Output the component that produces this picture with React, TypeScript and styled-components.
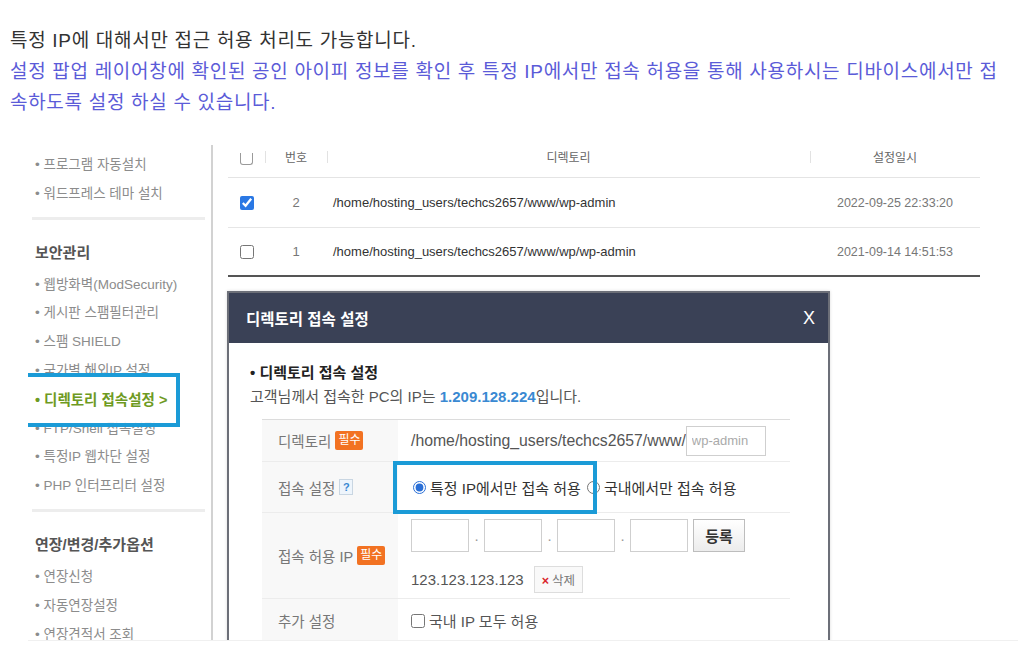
import React from "react";
import styled, { createGlobalStyle, css } from "styled-components";

const GlobalStyle = createGlobalStyle`
  html, body {
    margin: 0;
    padding: 0;
    background: #fff;
  }
  body {
    font-family: "Liberation Sans", "Noto Sans CJK KR", sans-serif;
  }
  *, *::before, *::after {
    box-sizing: border-box;
  }
`;

const Page = styled.div`
  width: 1024px;
  height: 664px;
  overflow: hidden;
  padding: 25px 0 0 10px;
`;

const Intro = styled.div`
  font-size: 19px;
  letter-spacing: 0.7px;
  line-height: 31px;
  color: #333;
  white-space: nowrap;
`;

const Accent = styled.span`
  color: #5b5bd8;
`;

const Shot = styled.div`
  display: flex;
  margin: 27px 0 0 18px;
  width: 990px;
  height: 496px;
  overflow: hidden;
  border-bottom: 1px solid #f0f0f0;
`;

/* ---------- sidebar ---------- */

const Sidebar = styled.div`
  width: 185px;
  flex-shrink: 0;
  padding: 6px 0 0 7px;
  border-right: 2px solid #d2d2d2;
`;

const SideItem = styled.div<{ $active?: boolean }>`
  position: relative;
  font-size: 13.5px;
  line-height: 28.8px;
  color: #8c8c8c;
  white-space: nowrap;
  ${(p) =>
    p.$active &&
    css`
      z-index: 1;
      color: #6e9a22;
      font-size: 14.5px;
      font-weight: bold;
      &::before {
        content: "";
        position: absolute;
        z-index: -1;
        left: -11px;
        top: -13px;
        width: 156px;
        height: 54px;
        border: 4px solid #1b9bd7;
        background: rgba(255, 255, 255, 0.9);
      }
    `}
`;

const SideSep = styled.div`
  height: 3px;
  margin: 8px 6px 0 -3px;
  background: #ededed;
`;

const SideHeading = styled.div`
  font-size: 15px;
  font-weight: bold;
  line-height: 28px;
  color: #555;
  margin: 19px 0 4px;
  white-space: nowrap;
`;

/* ---------- main table ---------- */

const Main = styled.div`
  position: relative;
  flex: 1;
  padding-left: 15px;
`;

const Grid = styled.div`
  display: grid;
  grid-template-columns: 37px 62px 483px 170px;
  width: 752px;
`;

const HeadRow = styled(Grid)`
  height: 33px;
  padding-bottom: 9px;
  border-bottom: 1px solid #e4e4e4;
  font-size: 12px;
  color: #666;
`;

const HeadCell = styled.div<{ $divider?: boolean }>`
  position: relative;
  display: flex;
  align-items: center;
  justify-content: center;
  ${(p) =>
    p.$divider &&
    css`
      &::before {
        content: "";
        position: absolute;
        left: 0;
        top: 50%;
        width: 1px;
        height: 12px;
        margin-top: -6px;
        background: #e2e2e2;
      }
    `}
`;

const CutBox = styled.span`
  width: 13px;
  height: 12px;
  margin-top: 4px;
  border: 1px solid #9a9a9a;
  border-top: none;
  border-radius: 0 0 3px 3px;
`;

const Row = styled(Grid)<{ $last?: boolean }>`
  height: ${(p) => (p.$last ? 49 : 50)}px;
  border-bottom: ${(p) => (p.$last ? "2px solid #555" : "1px solid #e6e6e6")};
  align-items: center;
`;

const Cell = styled.div<{ $align?: string; $tone?: string; $size?: number }>`
  display: flex;
  align-items: center;
  justify-content: ${(p) => p.$align || "center"};
  padding-left: ${(p) => (p.$align ? 6 : 0)}px;
  font-size: ${(p) => p.$size || 13}px;
  color: ${(p) => p.$tone || "#777"};
  white-space: nowrap;
`;

const Check = styled.input.attrs({ type: "checkbox" })`
  width: 14px;
  height: 14px;
  margin: 0;
  accent-color: #2a78e4;
`;

/* ---------- modal ---------- */

const Modal = styled.div`
  position: absolute;
  left: 14px;
  top: 146px;
  width: 603px;
  height: 380px;
  background: #fff;
  border: 2px solid #6c6f78;
  box-shadow: 0 0 3px rgba(0, 0, 0, 0.15);
`;

const ModalHead = styled.div`
  height: 50px;
  display: flex;
  align-items: center;
  justify-content: space-between;
  padding: 0 13px 0 17px;
  background: #3a4156;
  color: #fff;
  font-size: 15.5px;
  font-weight: bold;
`;

const Close = styled.span`
  font-family: "Liberation Sans", sans-serif;
  font-size: 18px;
  font-weight: normal;
`;

const ModalBody = styled.div`
  padding: 18px 0 0 21px;
`;

const BodyTitle = styled.div`
  font-size: 15px;
  font-weight: bold;
  line-height: 24px;
  color: #222;
`;

const BodyText = styled.div`
  font-size: 15px;
  line-height: 24px;
  color: #555;
`;

const MyIp = styled.b`
  color: #3a89d2;
`;

const FormTable = styled.div`
  width: 528px;
  margin: 10px 0 0 12px;
  border-top: 1px solid #dcdcdc;
`;

const FormRow = styled.div<{ $h?: number }>`
  display: grid;
  grid-template-columns: 136px 1fr;
  min-height: ${(p) => p.$h || 42}px;
  border-bottom: 1px solid #ececec;
`;

const Label = styled.div`
  display: flex;
  align-items: center;
  gap: 4px;
  padding-left: 16px;
  background: #f8f8f8;
  font-size: 14.5px;
  color: #777;
  white-space: nowrap;
`;

const Required = styled.span`
  display: inline-block;
  padding: 0 3px;
  line-height: 19px;
  font-size: 12px;
  color: #fff;
  background: #f27222;
  border-radius: 2px;
`;

const Help = styled.span`
  display: inline-flex;
  align-items: center;
  justify-content: center;
  width: 14px;
  height: 16px;
  border: 1px solid #c9d6e2;
  background: #eef5fc;
  color: #3a89d2;
  font-size: 11px;
  font-weight: bold;
`;

const Value = styled.div<{ $stack?: boolean }>`
  position: relative;
  display: flex;
  flex-direction: ${(p) => (p.$stack ? "column" : "row")};
  align-items: ${(p) => (p.$stack ? "flex-start" : "center")};
  justify-content: ${(p) => (p.$stack ? "center" : "flex-start")};
  padding: ${(p) => (p.$stack ? "6px 0 5px 13px" : "0 0 0 13px")};
  font-size: 15px;
  color: #555;
  white-space: nowrap;
`;

const Path = styled.span`
  font-size: 15.8px;
`;

const TextInput = styled.input`
  width: 80px;
  height: 30px;
  margin: 0;
  padding: 0 5px;
  border: 1px solid #cfcfcf;
  font: inherit;
  font-size: 13px;
  color: #555;
  &::placeholder {
    color: #aaa;
  }
`;

const IpInput = styled(TextInput)`
  width: 58px;
  height: 33px;
`;

const Radio = styled.input.attrs({ type: "radio", name: "mode" })`
  width: 13px;
  height: 13px;
  margin: 0 4px 0 2px;
  accent-color: #2a6fd6;
`;

const RadioText = styled.span`
  color: #333;
  margin-right: 4px;
`;

const Highlight = styled.div`
  position: absolute;
  left: -5px;
  top: -1px;
  width: 204px;
  height: 53px;
  border: 4px solid #1b9bd7;
  pointer-events: none;
`;

const Line = styled.div<{ $gap?: number }>`
  display: flex;
  align-items: center;
  margin-top: ${(p) => p.$gap || 0}px;
`;

const Dot = styled.span`
  width: 15px;
  text-align: center;
  color: #999;
`;

const RegisterButton = styled.button`
  width: 52px;
  height: 33px;
  margin-left: 5px;
  border: 1px solid #bdbdbd;
  background: linear-gradient(#ffffff, #ececec);
  font: inherit;
  font-size: 15px;
  font-weight: bold;
  color: #333;
`;

const DeleteButton = styled.button`
  height: 27px;
  margin-left: 10px;
  padding: 0 7px;
  border: 1px solid #dddddd;
  background: #f9f9f9;
  font: inherit;
  font-size: 12.5px;
  color: #777;
  b {
    color: #d9252a;
    margin-right: 3px;
  }
`;

const Box = styled.input.attrs({ type: "checkbox" })`
  width: 14px;
  height: 14px;
  margin: 0 4px 0 0;
`;

const records = [
  { id: 2, path: "/home/hosting_users/techcs2657/www/wp-admin", date: "2022-09-25 22:33:20", checked: true },
  { id: 1, path: "/home/hosting_users/techcs2657/www/wp/wp-admin", date: "2021-09-14 14:51:53", checked: false },
];

export default function App() {
  return (
    <Page>
      <GlobalStyle />
      <Intro>
        특정 IP에 대해서만 접근 허용 처리도 가능합니다.
        <br />
        <Accent>
          설정 팝업 레이어창에 확인된 공인 아이피 정보를 확인 후 특정 IP에서만 접속 허용을 통해 사용하시는 디바이스에서만 접
          <br />
          속하도록 설정 하실 수 있습니다.
        </Accent>
      </Intro>

      <Shot>
        <Sidebar>
          <SideItem>• 프로그램 자동설치</SideItem>
          <SideItem>• 워드프레스 테마 설치</SideItem>
          <SideSep />
          <SideHeading>보안관리</SideHeading>
          <SideItem>• 웹방화벽(ModSecurity)</SideItem>
          <SideItem>• 게시판 스팸필터관리</SideItem>
          <SideItem>• 스팸 SHIELD</SideItem>
          <SideItem>• 국가별 해외IP 설정</SideItem>
          <SideItem $active>• 디렉토리 접속설정 &gt;</SideItem>
          <SideItem>• FTP/Shell 접속설정</SideItem>
          <SideItem>• 특정IP 웹차단 설정</SideItem>
          <SideItem>• PHP 인터프리터 설정</SideItem>
          <SideSep />
          <SideHeading>연장/변경/추가옵션</SideHeading>
          <SideItem>• 연장신청</SideItem>
          <SideItem>• 자동연장설정</SideItem>
          <SideItem>• 연장견적서 조회</SideItem>
        </Sidebar>

        <Main>
          <HeadRow>
            <HeadCell>
              <CutBox />
            </HeadCell>
            <HeadCell $divider>번호</HeadCell>
            <HeadCell $divider>디렉토리</HeadCell>
            <HeadCell $divider>설정일시</HeadCell>
          </HeadRow>
          {records.map((r, i) => (
            <Row key={r.id} $last={i === records.length - 1}>
              <Cell>
                <Check defaultChecked={r.checked} />
              </Cell>
              <Cell>{r.id}</Cell>
              <Cell $align="flex-start" $tone="#333" $size={13}>
                {r.path}
              </Cell>
              <Cell $size={12.5}>{r.date}</Cell>
            </Row>
          ))}

          <Modal>
            <ModalHead>
              <span>디렉토리 접속 설정</span>
              <Close>X</Close>
            </ModalHead>
            <ModalBody>
              <BodyTitle>• 디렉토리 접속 설정</BodyTitle>
              <BodyText>
                고객님께서 접속한 PC의 IP는 <MyIp>1.209.128.224</MyIp>입니다.
              </BodyText>
              <FormTable>
                <FormRow $h={42}>
                  <Label>
                    디렉토리 <Required>필수</Required>
                  </Label>
                  <Value>
                    <Path>/home/hosting_users/techcs2657/www/</Path>
                    <TextInput placeholder="wp-admin" />
                  </Value>
                </FormRow>
                <FormRow $h={51}>
                  <Label>
                    접속 설정 <Help>?</Help>
                  </Label>
                  <Value>
                    <Radio defaultChecked />
                    <RadioText>특정 IP에서만 접속 허용</RadioText>
                    <Radio />
                    <RadioText>국내에서만 접속 허용</RadioText>
                    <Highlight />
                  </Value>
                </FormRow>
                <FormRow $h={86}>
                  <Label>
                    접속 허용 IP <Required>필수</Required>
                  </Label>
                  <Value $stack>
                    <Line>
                      <IpInput />
                      <Dot>.</Dot>
                      <IpInput />
                      <Dot>.</Dot>
                      <IpInput />
                      <Dot>.</Dot>
                      <IpInput />
                      <RegisterButton>등록</RegisterButton>
                    </Line>
                    <Line $gap={14}>
                      123.123.123.123
                      <DeleteButton>
                        <b>×</b>삭제
                      </DeleteButton>
                    </Line>
                  </Value>
                </FormRow>
                <FormRow $h={44}>
                  <Label>추가 설정</Label>
                  <Value>
                    <Box />
                    국내 IP 모두 허용
                  </Value>
                </FormRow>
              </FormTable>
            </ModalBody>
          </Modal>
        </Main>
      </Shot>
    </Page>
  );
}
